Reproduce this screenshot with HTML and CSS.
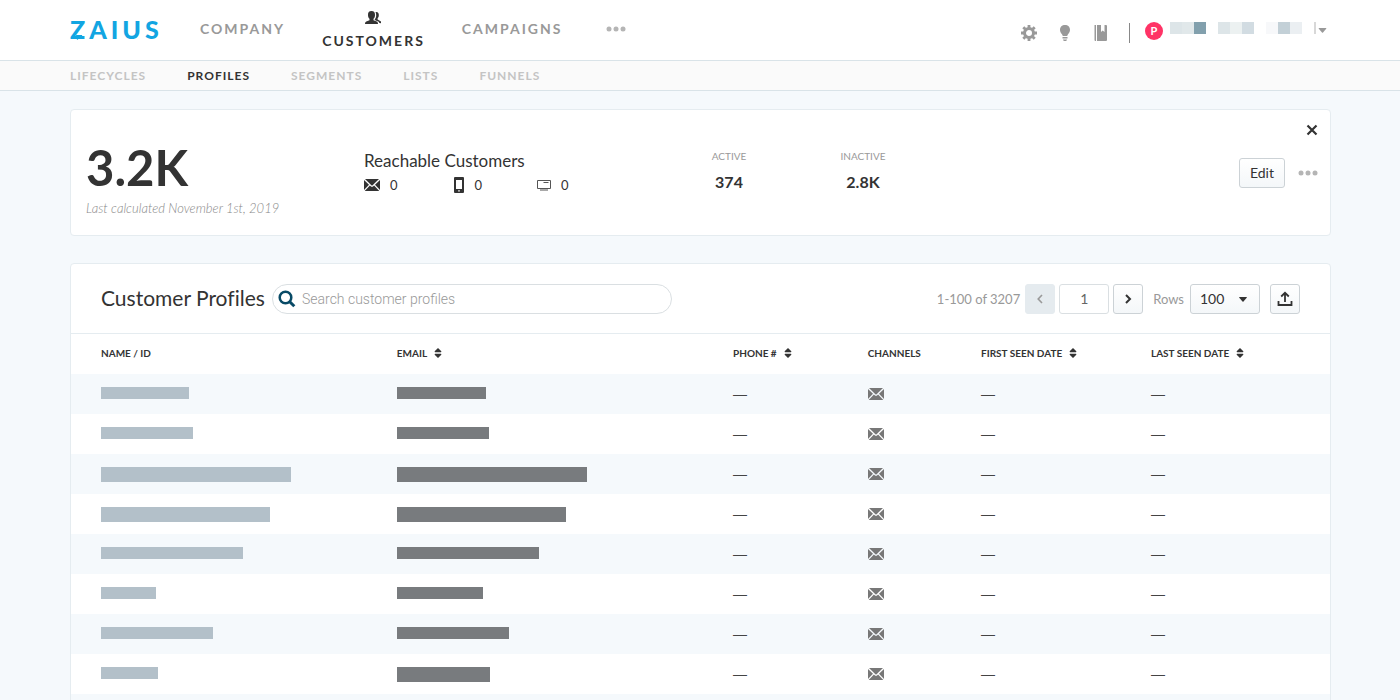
FILE: index.html
```html
<!DOCTYPE html>
<html lang="en">
<head>
<meta charset="utf-8">
<title>Zaius – Customer Profiles</title>
<link rel="stylesheet" href="styles.css">
</head>
<body>
<svg class="sprite" aria-hidden="true">
  <symbol id="mail" viewBox="0 0 16 12">
    <path fill="currentColor" d="M1 0h14L8.6 6.2a.9.9 0 0 1-1.2 0zM0 .9 5 5.700 0 11zM16 .9 11 5.700 16 11zM5.900 6.500l.8.7a1.900 1.900 0 0 0 2.600 0l.8-.7L15.300 12H.7z"/>
  </symbol>
  <symbol id="sort" viewBox="0 0 8 10">
    <path fill="currentColor" d="M4 0 7.300 3.300Q7.600 4.200 6.800 4.200H1.200Q.4 4.200.7 3.300zM4 10 .7 6.700Q.4 5.800 1.200 5.800h5.600q.8 0 .5.9z"/>
  </symbol>
  <symbol id="dots" viewBox="0 0 20 6">
    <g fill="currentColor"><circle cx="3" cy="3" r="2.500"/><circle cx="10" cy="3" r="2.500"/><circle cx="17" cy="3" r="2.500"/></g>
  </symbol>
  <symbol id="caret" viewBox="0 0 8 5"><path fill="currentColor" d="M.5 0h7q.5.2.2.7L4.500 4.600q-.5.500-1 0L.3.700Q0 .2.5 0z"/></symbol>
</svg>
<div class="app">
  <header class="topbar">
    <a class="logo" href="#" aria-label="Zaius">
      <span>ZAIUS</span>
      <svg class="spark" width="12" height="5" viewBox="0 0 12 5" aria-hidden="true"><path fill="#12a5e2" d="M4 0h6L11 4 8 3 5 5z"/></svg>
    </a>
    <nav class="nav" aria-label="Main">
      <a href="#">COMPANY</a>
      <a href="#" class="current">
        <svg width="17" height="14" viewBox="0 0 17 14" aria-hidden="true"><path fill="#333" d="M6.500 0C9 0 10.200 1.600 10 4.200c-.1 1.700-.7 2.800-1.500 3.600v1.400l3.200 1.300c1 .4 1.300 1.300 1.300 2.500H0c0-1.200.3-2.100 1.300-2.500l3.200-1.300V7.800C3.700 7 3.100 5.900 3 4.200 2.800 1.600 4 0 6.500 0z"/><path fill="#333" d="M10.500 1.200c2.300-.5 3.500 1 3.300 3.300-.1 1.300-.6 2.300-1.200 2.900v1.200l3.400 2v1.600l-1.600-.3-.7-1.100-2.900-1.300-1-.4V8.200c.9-1 1.400-2.300 1.400-4 0-1.200-.2-2.200-.7-3z"/></svg>
        <span>CUSTOMERS</span>
      </a>
      <a href="#">CAMPAIGNS</a>
      <button class="plain more" aria-label="More sections"><svg width="20" height="6"><use href="#dots"/></svg></button>
    </nav>
    <div class="tools">
      <button class="plain" aria-label="Settings"><svg width="16" height="16" viewBox="0 0 16 16"><circle cx="8" cy="8" r="4.500" fill="none" stroke="#999" stroke-width="3"/><path stroke="#999" stroke-width="2.800" d="M8 0v3M8 13v3M0 8h3M13 8h3M2.300 2.300l2 2M11.700 11.700l2 2M2.300 13.700l2-2M11.700 4.300l2-2"/></svg></button>
      <button class="plain" aria-label="Tips"><svg width="16" height="16" viewBox="0 0 16 16"><path fill="#999" d="M8 0c3 0 5 2 5 4.900 0 2-1.200 3-2 4.400-.4.700-.4 1.700-1.100 1.700H6.100C5.400 11 5.400 10 5 9.300 4.200 7.900 3 6.900 3 4.900 3 2 5 0 8 0zM5.500 12h5v1.500h-5zM6 14.500h4c-.2 1-.8 1.500-2 1.500s-1.800-.5-2-1.500z"/></svg></button>
      <button class="plain" aria-label="Documentation"><svg width="16" height="16" viewBox="0 0 16 16"><path fill="#999" d="M1.500 0H3v16h-.500A1 1 0 0 1 1.500 15zM4 0h4v7l1.700-1.500L11.500 7V0H13a1 1 0 0 1 1 1v14a1 1 0 0 1-1 1H4z"/></svg></button>
      <span class="rule"></span>
      <button class="plain account" aria-label="Account">
        <span class="avatar">P</span>
        <svg class="name" width="146" height="12" viewBox="0 0 146 12" aria-hidden="true"><path fill="#dde5e8" d="M0 0h12v12H0zM48 0h12v12H48z"/><path fill="#e1e8ea" d="M12 0h12v12H12z"/><path fill="#82a0ad" d="M24 0h12v12H24z"/><path fill="#ecf1f1" d="M60 0h12v12H60z"/><path fill="#d2dce2" d="M72 0h12v12H72z"/><path fill="#f7f8fa" d="M96 0h12v12H96z"/><path fill="#c3d0d7" d="M108 0h12v12h-12z"/><path fill="#ebeff2" d="M120 0h12v12h-12z"/><path fill="#d8d8d8" d="M144 0h2v12h-2z"/></svg>
        <svg class="down" width="9" height="5"><use href="#caret"/></svg>
      </button>
    </div>
  </header>
  <nav class="subnav" aria-label="Customers">
    <a href="#">LIFECYCLES</a><a href="#" class="current">PROFILES</a><a href="#">SEGMENTS</a><a href="#">LISTS</a><a href="#">FUNNELS</a>
  </nav>
  <main class="main">
    <section class="card summary">
      <div class="total"><strong>3.2K</strong><em>Last calculated November 1st, 2019</em></div>
      <div class="reach">
        <h2>Reachable Customers</h2>
        <ul>
          <li><svg width="16" height="12"><use href="#mail"/></svg>0</li>
          <li><svg width="12" height="16" viewBox="0 0 12 16"><path fill="#333" fill-rule="evenodd" d="M2 0h8a1 1 0 0 1 1 1v14a1 1 0 0 1-1 1H2a1 1 0 0 1-1-1V1a1 1 0 0 1 1-1zm1 3v9h6V3zm2.200 10.200v1.300h1.600v-1.300z"/></svg>0</li>
          <li><svg width="14" height="12" viewBox="0 0 14 12"><path fill="none" stroke="#555" d="M.5 1.500h13v8H.5z"/><path stroke="#555" stroke-width="1.200" d="M6.500 3.500h5M3 11h8"/></svg>0</li>
        </ul>
      </div>
      <dl class="stats">
        <div><dt>ACTIVE</dt><dd>374</dd></div>
        <div><dt>INACTIVE</dt><dd>2.8K</dd></div>
      </dl>
      <div class="actions">
        <button class="plain" aria-label="Close"><svg width="12" height="12" viewBox="0 0 12 12"><path stroke="#333" stroke-width="2.200" d="M1.500 1.500l9 9M10.500 1.500l-9 9"/></svg></button>
        <div class="edit-row"><button class="btn">Edit</button><button class="plain more" aria-label="More actions"><svg width="20" height="6"><use href="#dots"/></svg></button></div>
      </div>
    </section>
    <section class="card profiles">
      <div class="toolbar">
        <h1>Customer Profiles</h1>
        <label class="search">
          <svg width="18" height="18" viewBox="0 0 18 18" aria-hidden="true"><circle cx="7.500" cy="7.500" r="5.800" fill="none" stroke="#084a66" stroke-width="2.500"/><path stroke="#084a66" stroke-width="3" d="M11.500 11.500l4.800 4.800"/></svg>
          <input type="search" placeholder="Search customer profiles" aria-label="Search customer profiles">
        </label>
        <div class="pager">
          <span class="range">1-100 of 3207</span>
          <button class="btn icon off" disabled aria-label="Previous page"><svg width="8" height="10" viewBox="0 0 8 10"><path fill="none" stroke="#999" stroke-width="1.600" d="M6 1 2.200 5 6 9"/></svg></button>
          <input class="page" type="text" value="1" aria-label="Page">
          <button class="btn icon" aria-label="Next page"><svg width="8" height="10" viewBox="0 0 8 10"><path fill="none" stroke="#333" stroke-width="2" d="M2 1 6 5 2 9"/></svg></button>
          <label class="rows-label" for="rows">Rows</label>
          <span class="pick"><select id="rows" class="btn"><option>100</option></select><svg width="8" height="5" aria-hidden="true"><use href="#caret"/></svg></span>
          <button class="btn icon" aria-label="Export"><svg width="16" height="16" viewBox="0 0 16 16"><path fill="none" stroke="#333" stroke-width="1.800" d="M1.500 10v4h13v-4M8 11V2.500M4.200 5.500 8 1.800l3.800 3.700"/></svg></button>
        </div>
      </div>
      <table>
        <colgroup><col class="c-name"><col class="c-email"><col class="c-phone"><col class="c-chan"><col class="c-first"><col></colgroup>
        <thead><tr>
          <th>NAME / ID</th>
          <th>EMAIL<svg width="8" height="10"><use href="#sort"/></svg></th>
          <th>PHONE #<svg width="8" height="10"><use href="#sort"/></svg></th>
          <th>CHANNELS</th>
          <th>FIRST SEEN DATE<svg width="8" height="10"><use href="#sort"/></svg></th>
          <th>LAST SEEN DATE<svg width="8" height="10"><use href="#sort"/></svg></th>
        </tr></thead>
        <tbody>
          <tr><td><i class="bar" style="width:88px"></i></td><td><i class="bar dark" style="width:89px"></i></td><td>—</td><td><svg width="16" height="12"><use href="#mail"/></svg></td><td>—</td><td>—</td></tr>
          <tr><td><i class="bar" style="width:92px"></i></td><td><i class="bar dark" style="width:92px"></i></td><td>—</td><td><svg width="16" height="12"><use href="#mail"/></svg></td><td>—</td><td>—</td></tr>
          <tr><td><i class="bar tall" style="width:190px"></i></td><td><i class="bar tall dark" style="width:190px"></i></td><td>—</td><td><svg width="16" height="12"><use href="#mail"/></svg></td><td>—</td><td>—</td></tr>
          <tr><td><i class="bar tall" style="width:169px"></i></td><td><i class="bar tall dark" style="width:169px"></i></td><td>—</td><td><svg width="16" height="12"><use href="#mail"/></svg></td><td>—</td><td>—</td></tr>
          <tr><td><i class="bar" style="width:142px"></i></td><td><i class="bar dark" style="width:142px"></i></td><td>—</td><td><svg width="16" height="12"><use href="#mail"/></svg></td><td>—</td><td>—</td></tr>
          <tr><td><i class="bar" style="width:55px"></i></td><td><i class="bar dark" style="width:86px"></i></td><td>—</td><td><svg width="16" height="12"><use href="#mail"/></svg></td><td>—</td><td>—</td></tr>
          <tr><td><i class="bar" style="width:112px"></i></td><td><i class="bar dark" style="width:112px"></i></td><td>—</td><td><svg width="16" height="12"><use href="#mail"/></svg></td><td>—</td><td>—</td></tr>
          <tr><td><i class="bar" style="width:57px"></i></td><td><i class="bar tall dark" style="width:93px"></i></td><td>—</td><td><svg width="16" height="12"><use href="#mail"/></svg></td><td>—</td><td>—</td></tr>
          <tr><td></td><td></td><td></td><td></td><td></td><td></td></tr>
        </tbody>
      </table>
    </section>
  </main>
</div>
</body>
</html>
```
FILE: styles.css
```css
* { box-sizing: border-box; }
body { margin: 0; background: #f5f9fc; color: #333; font: 14px/20px Lato, "Open Sans", sans-serif; font-variant-ligatures: none; }
h1, h2, dl, dd, ul { margin: 0; padding: 0; font-weight: 400; list-style: none; }
a { color: inherit; text-decoration: none; }
svg { display: block; flex: none; }
button, input, select { font: inherit; color: inherit; margin: 0; }
.sprite { position: absolute; width: 0; height: 0; }
.app { height: 100vh; overflow: hidden; }

.plain { display: flex; align-items: center; padding: 0; border: 0; background: none; }
.more { color: #b5b5b5; }

.topbar { display: flex; height: 61px; padding: 0 70px; background: #fff; border-bottom: 1px solid #d9e3e8; }
.logo { position: relative; width: 130px; padding-top: 14px; color: #12a5e2; font-size: 25px; line-height: 30px; font-weight: 900; letter-spacing: 4px; }
.spark { position: absolute; left: 2px; top: 35px; }
.nav { display: flex; gap: 37px; color: #999; font-size: 14px; line-height: 20px; font-weight: 700; letter-spacing: 2px; }
.nav > a { padding-top: 19px; }
.nav > .current { display: flex; flex-direction: column; align-items: center; gap: 6px; padding-top: 11px; color: #333; }
.nav .more { align-self: flex-start; height: 20px; margin: 19px 0 0 6px; }
.tools { display: flex; align-items: center; gap: 20px; margin-left: auto; padding-top: 6px; }
.rule { width: 1px; height: 20px; background: #888; }
.account { gap: 7px; margin: 0 3px 5px -5px; color: #999; }
.account .name { margin-bottom: 5px; }
.account .down { margin-left: -5px; }
.avatar { width: 18px; height: 18px; border-radius: 50%; background: #ff3366; color: #fff; font-size: 11px; line-height: 18px; font-weight: 700; text-align: center; }

.subnav { display: flex; gap: 41px; height: 30px; padding: 0 70px; background: #fafafa; border-bottom: 1px solid #d9e3e8; color: #c4c4c4; font-size: 12px; line-height: 30px; font-weight: 700; letter-spacing: 1px; }
.subnav .current { color: #333; }

.main { padding: 18px 69px 18px 70px; }
.card { background: #fff; border: 1px solid #e5ecf0; border-radius: 4px; }
.summary { display: grid; grid-template-columns: 278fr 298fr 564fr 92px; height: 127px; margin-bottom: 27px; padding: 0 12px 0 15px; }
.total strong { display: block; padding-top: 32px; font-size: 49px; line-height: 50px; }
.total em { display: block; padding-top: 6px; color: #888; font-size: 13px; font-weight: 300; white-space: nowrap; }
.reach { padding-top: 40px; }
.reach h2 { font-size: 17px; line-height: 22px; }
.reach ul { display: flex; gap: 55px; padding-top: 3px; }
.reach li { display: flex; align-items: center; gap: 10px; font-size: 13px; }
.stats { display: flex; padding-top: 36px; text-align: center; }
.stats div { width: 134px; }
.stats dt { color: #999; font-size: 10px; }
.stats dd { padding-top: 6px; font-size: 16px; font-weight: 700; }
.actions { display: flex; flex-direction: column; align-items: flex-end; gap: 22px; padding-top: 14px; }
.edit-row { display: flex; gap: 13px; }

.btn { height: 30px; padding: 0 10px; border: 1px solid #ccd2d6; border-radius: 3px; background: linear-gradient(#fff, #f4f7f9); font-size: 14px; line-height: 26px; }
.btn.icon { display: flex; align-items: center; justify-content: center; width: 30px; padding: 0; }
.off { border-color: #e5ebef; background: #e5ebef; }

.profiles { border-radius: 4px 4px 0 0; }
.toolbar { display: flex; align-items: center; height: 70px; padding: 0 30px; border-bottom: 1px solid #e5ecf0; }
.toolbar h1 { width: 171px; padding-bottom: 2px; font-size: 21px; line-height: 28px; white-space: nowrap; }
.search { display: flex; align-items: center; gap: 6px; flex: 0 1 400px; height: 30px; padding: 0 12px 0 5px; border: 1px solid #dadfe2; border-radius: 15px; }
.search input { flex: 1; min-width: 0; padding: 0; border: 0; outline: 0; background: none; font: 300 14px/20px Roboto, "Liberation Sans", sans-serif; }
.search input::placeholder { color: #999; opacity: 1; }
.pager { display: flex; align-items: center; gap: 4px; margin-left: auto; color: #333; }
.range, .rows-label { color: #999; font-size: 13px; white-space: nowrap; }
.range { margin-right: 1px; }
.rows-label { margin: 0 2px 0 6px; }
.page { width: 50px; height: 30px; padding: 0; border: 1px solid #dadfe2; border-radius: 3px; color: #666; text-align: center; }
.pick { position: relative; margin-right: 6px; }
.pick select { display: block; width: 70px; padding: 0 9px; appearance: none; }
.pick svg { position: absolute; right: 13px; top: 13px; pointer-events: none; }

table { width: 100%; border-collapse: collapse; table-layout: fixed; }
.c-name { width: 23.5%; }
.c-email { width: 26.7%; }
.c-phone { width: 10.7%; }
.c-chan { width: 9%; }
.c-first { width: 13.5%; }
th, td { height: 40px; padding: 0 0 0 30px; text-align: left; white-space: nowrap; }
th { padding-bottom: 2px; font-size: 10px; font-weight: 700; }
th svg { display: inline-block; margin-left: 7px; vertical-align: -1px; }
td { color: #444; font: 14px/20px "Liberation Sans", sans-serif; }
td svg { color: #777; }
tbody tr:nth-child(odd) { background: #f5f9fc; }
.bar { display: block; height: 12px; margin-bottom: 2px; background: #b3c0c9; }
.dark { background: #787b7e; }
.tall { height: 15px; margin: 0; }
```
